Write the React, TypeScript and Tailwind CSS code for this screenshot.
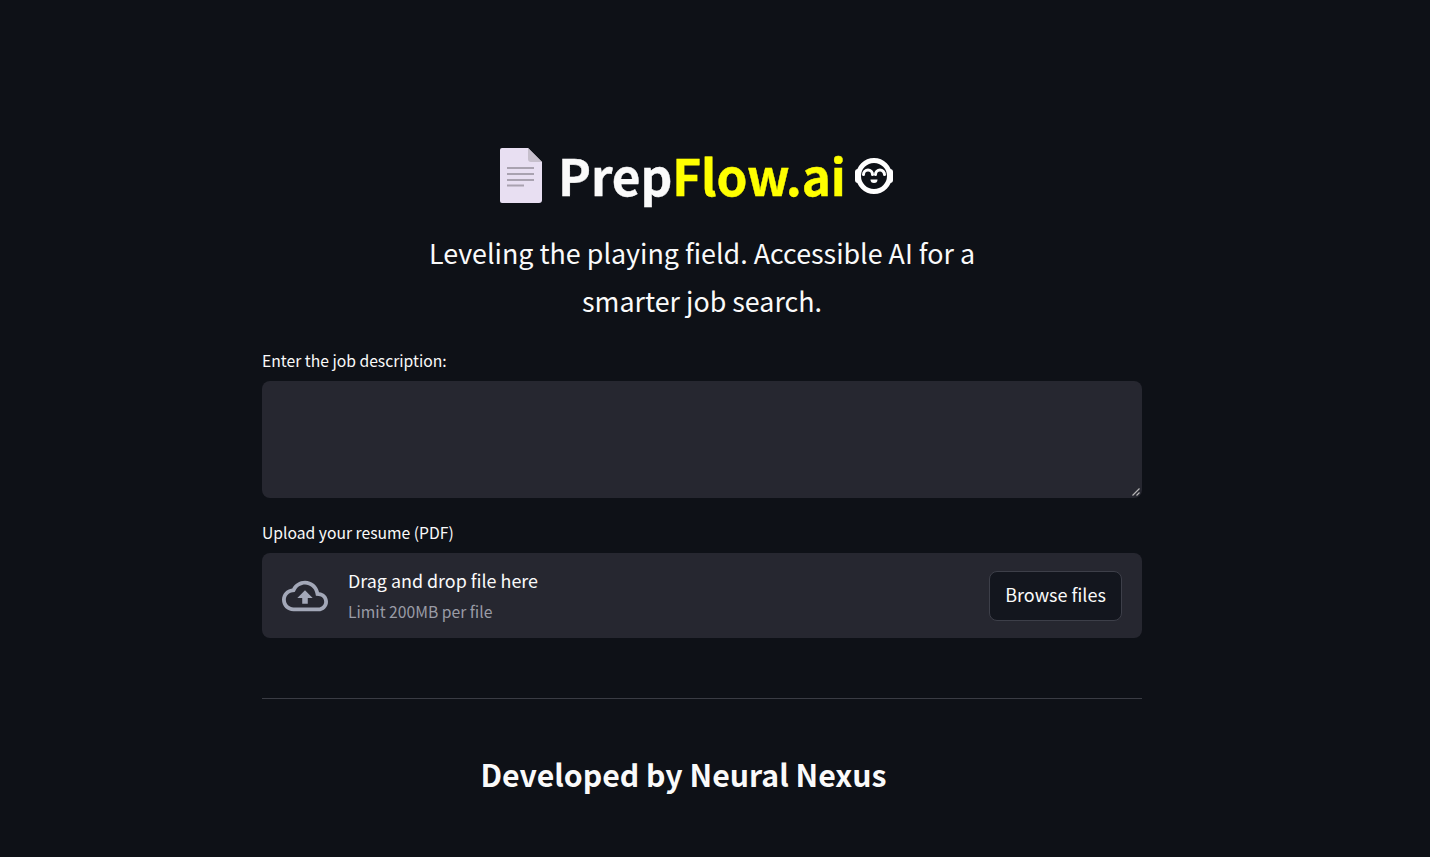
import React from 'react';

const FONT = '"Noto Sans CJK JP", "Noto Sans", sans-serif';

const PageIcon = () => (
  <svg width="44" height="57" viewBox="0 0 44 57" className="shrink-0">
    <path d="M3 1H29L43 15V53a3 3 0 0 1-3 3H3a2 2 0 0 1-2-2V3a2 2 0 0 1 2-2z" fill="#e8dff2" />
    <path d="M29 1L43 15H32a3 3 0 0 1-3-3z" fill="#c6bfcc" />
    <g fill="#a9a2b0">
      <rect x="8" y="20" width="27" height="2" />
      <rect x="8" y="26" width="27" height="2" />
      <rect x="8" y="32" width="27" height="2" />
      <rect x="8" y="37.500" width="17" height="2" />
    </g>
  </svg>
);

const FaceIcon = () => (
  <svg width="38" height="36" viewBox="0 0 38 36" className="shrink-0">
    <rect x="0" y="11" width="6" height="14" rx="3" fill="#fff" />
    <rect x="32" y="11" width="6" height="14" rx="3" fill="#fff" />
    <circle cx="19" cy="18" r="15.500" fill="#0e1117" stroke="#fff" strokeWidth="5" />
    <path d="M8.500 16.500a4.500 4.500 0 0 1 9 0M20.500 16.500a4.500 4.500 0 0 1 9 0" fill="none" stroke="#fff" strokeWidth="3" strokeLinecap="round" />
    <path d="M15.500 21.500h7a3.500 3.500 0 0 1-7 0z" fill="#fff" />
  </svg>
);

const CloudIcon = () => (
  <svg width="46" height="46" viewBox="0 0 24 24" fill="#a3a8b8" className="shrink-0">
    <path d="M19.35 10.04C18.67 6.59 15.64 4 12 4 9.11 4 6.6 5.64 5.35 8.04 2.34 8.36 0 10.91 0 14c0 3.31 2.69 6 6 6h13c2.76 0 5-2.24 5-5 0-2.64-2.05-4.78-4.65-4.96zM19 18H6c-2.21 0-4-1.79-4-4 0-2.05 1.53-3.76 3.56-3.97l1.07-.11.5-.95C8.08 7.14 9.94 6 12 6c2.62 0 4.88 1.86 5.39 4.43l.3 1.5 1.53.11c1.56.1 2.78 1.41 2.78 2.96 0 1.65-1.35 3-3 3zM8 13h2.55v3h2.9v-3H16l-4-4z" />
  </svg>
);

export default function App() {
  return (
    <div
      className="h-[857px] overflow-hidden bg-[#0e1117] text-[#fafafa]"
      style={{ fontFamily: FONT }}
    >
      <main className="ml-[262px] w-[880px] pt-[147px]">
        {/* Title */}
        <div className="flex h-[57px] items-center pl-[237px]">
          <PageIcon />
          <h1 className="ml-[15px] pb-[3px] text-[49.500px] leading-[57px] font-bold tracking-[-0.1px] whitespace-nowrap [-webkit-text-stroke:0.4px_currentColor]">
            Prep<span className="text-[#ffff00]">Flow.ai</span>
          </h1>
          <div className="ml-[9px]">
            <FaceIcon />
          </div>
        </div>

        {/* Tagline */}
        <p className="mt-[25px] text-center text-[26.850px] leading-[48px]">
          Leveling the playing field. Accessible AI for a
          <br />
          smarter job search.
        </p>

        {/* Job description */}
        <label className="mt-[24px] block text-[15.700px] leading-[24px]">Enter the job description:</label>
        <div className="relative mt-[8px] h-[117px] rounded-lg bg-[#262730]">
          <svg width="8" height="8" viewBox="0 0 8 8" className="absolute right-[2px] bottom-[2px]">
            <path d="M0.500 7.500L7.500 0.500M4.500 7.500L7.500 4.500" stroke="#b5b5b5" strokeWidth="1.200" />
          </svg>
        </div>

        {/* Resume upload */}
        <label className="mt-[23px] block text-[15.700px] leading-[24px]">Upload your resume (PDF)</label>
        <div className="mt-[8px] flex h-[85px] items-center rounded-lg bg-[#262730] pr-[20px] pl-[20px]">
          <CloudIcon />
          <div className="ml-[20px] flex flex-1 flex-col pb-[1px]">
            <span className="text-[17.900px] leading-[26px]">Drag and drop file here</span>
            <span className="mt-[7px] text-[15.700px] leading-[24px] text-[#9a9ca6]">Limit 200MB per file</span>
          </div>
          <button className="h-[50px] w-[133px] rounded-lg border border-[#3d3f49] bg-[#13161e] pb-[2px] text-[18px] text-[#fafafa]">
            Browse files
          </button>
        </div>

        <hr className="mt-[60px] border-0 border-t border-[#3a3c44]" />

        {/* Footer */}
        <h2 className="mt-[52px] pr-[37px] text-center text-[30.250px] leading-[46px] font-semibold">
          Developed by Neural Nexus
        </h2>
      </main>
    </div>
  );
}
